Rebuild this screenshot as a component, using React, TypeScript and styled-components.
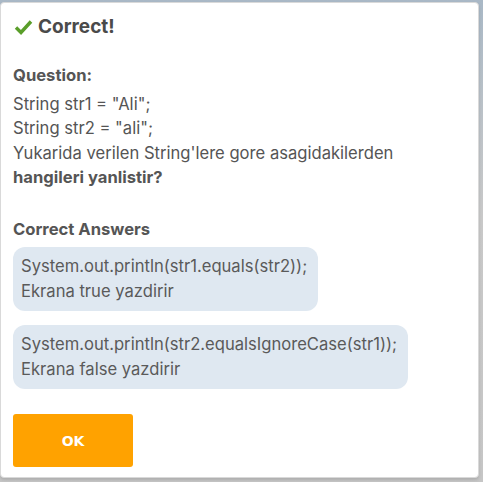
import { createGlobalStyle } from "styled-components";
import styled from "styled-components";

const GlobalStyle = createGlobalStyle`
  html, body {
    margin: 0;
    padding: 0;
    height: 100%;
    overflow: hidden;
  }
  body {
    background: linear-gradient(180deg, #a9b8c6 0%, #b9c1c8 20%, #c9c9c9 45%, #c6c6c6 100%);
    font-family: Inter, "Noto Sans", sans-serif;
  }
`;

const Page = styled.div`
  padding: 2px 4px 0 0;
`;

const Card = styled.div`
  width: 479px;
  height: 476px;
  box-sizing: border-box;
  background: #fff;
  border: 1px solid #d9d9d9;
  border-radius: 4px;
  padding: 11px 12px 0 12px;
  display: flex;
  flex-direction: column;
  color: #555;
  box-shadow: 0 2px 3px rgba(0, 0, 0, 0.12);
`;

const Title = styled.div`
  display: flex;
  align-items: center;
  gap: 5px;
  font-size: 19px;
  font-weight: 700;
  line-height: 26px;
  color: #4a4a4a;
  padding-left: 1px;
`;

const SectionLabel = styled.div<{ $top: number }>`
  margin-top: ${(p) => p.$top}px;
  font-size: 16.6px;
  font-weight: 700;
  line-height: 22px;
  color: #555;
`;

const Body = styled.div`
  margin-top: 6px;
  font-size: 16.6px;
  line-height: 24.3px;
  color: #555;

  b {
    font-weight: 700;
  }
`;

const Answers = styled.div`
  margin-top: 7px;
  display: flex;
  flex-direction: column;
  align-items: flex-start;
  gap: 14px;
`;

const AnswerBox = styled.div`
  background: #dfe8f1;
  border-radius: 12px;
  padding: 7px 11px 8px 8px;
  font-size: 16.6px;
  line-height: 24.5px;
  color: #5a5a5a;
`;

const OkButton = styled.button`
  margin-top: 25px;
  width: 120px;
  height: 53px;
  border: none;
  border-radius: 3px;
  background: #ffa200;
  color: #fff;
  font-family: "DejaVu Sans", Verdana, sans-serif;
  font-size: 14px;
  font-weight: 700;
  cursor: pointer;
`;

const Check = () => (
  <svg width="19" height="16" viewBox="0 0 19 16">
    <path
      d="M2 8.5 L7 13.5 L17 2.5"
      fill="none"
      stroke="#5a9e2a"
      strokeWidth="3.4"
      strokeLinecap="butt"
      strokeLinejoin="miter"
    />
  </svg>
);

export default function App() {
  return (
    <>
      <GlobalStyle />
      <Page>
        <Card>
          <Title>
            <Check />
            Correct!
          </Title>
          <SectionLabel $top={24}>Question:</SectionLabel>
          <Body>
            String str1 = "Ali";
            <br />
            String str2 = "ali";
            <br />
            Yukarida verilen String'lere gore asagidakilerden
            <br />
            <b>hangileri yanlistir?</b>
          </Body>
          <SectionLabel $top={29}>Correct Answers</SectionLabel>
          <Answers>
            <AnswerBox>
              System.out.println(str1.equals(str2));
              <br />
              Ekrana true yazdirir
            </AnswerBox>
            <AnswerBox>
              System.out.println(str2.equalsIgnoreCase(str1));
              <br />
              Ekrana false yazdirir
            </AnswerBox>
          </Answers>
          <div>
            <OkButton>OK</OkButton>
          </div>
        </Card>
      </Page>
    </>
  );
}
